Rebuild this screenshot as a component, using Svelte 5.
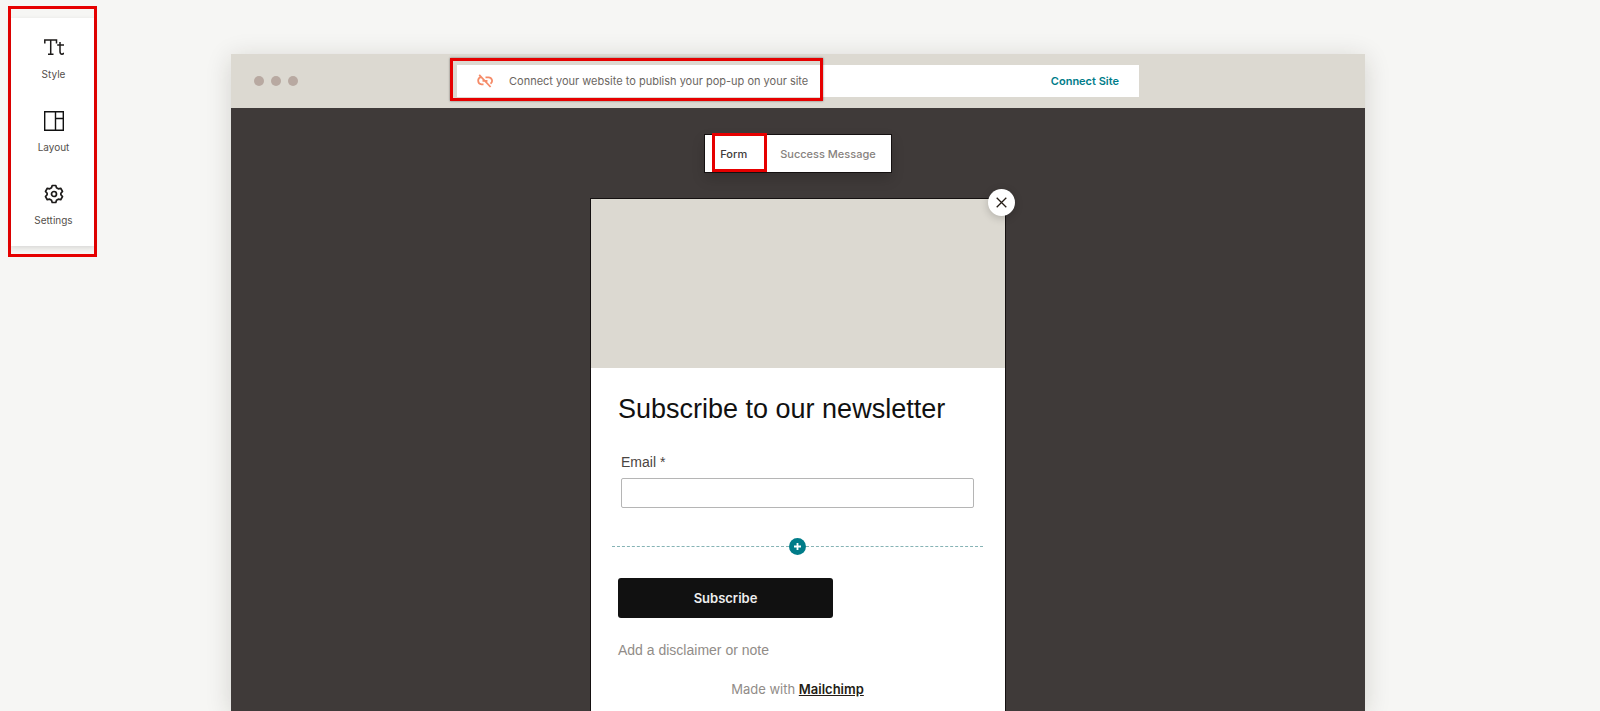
<script>
  let email = "";
  let activeTab = "form";

  const tools = [
    { id: "style", label: "Style" },
    { id: "layout", label: "Layout" },
    { id: "settings", label: "Settings" },
  ];
</script>

<div class="page">
  <aside class="highlight">
    <nav class="tools" aria-label="Editor">
      {#each tools as tool}
        <button type="button" class="tool">
          {#if tool.id === "style"}
            <svg width="20" height="20" viewBox="0 0 20 20" fill="none" stroke="#1c1a19" stroke-width="1.5">
              <path d="M.8 5.500V2H12.500V5.500M6.700 2V16M4 16.200H9.500M13.200 7H20M16 4V13.500Q16 16.200 18 16.200Q19.300 16.200 20 15" />
            </svg>
          {:else if tool.id === "layout"}
            <svg width="20" height="20" viewBox="0 0 20 20" fill="none" stroke="#111" stroke-width="1.4">
              <path d="M.7.7H19.300V19.300H.7ZM11.500.7V19.300M11.500 7.500H19.300" />
            </svg>
          {:else}
            <svg width="20" height="20" viewBox="0 0 20 20" fill="none" stroke="#1c1a19" stroke-width="1.7">
              <path d="M8.200 1.500H11.800L12.500 3.800L14.300 4.800L16.700 4.300L18.500 7.400L16.900 9.200V10.800L18.500 12.600L16.700 15.700L14.300 15.200L12.500 16.200L11.800 18.500H8.200L7.500 16.200L5.700 15.200L3.300 15.700L1.500 12.600L3.100 10.800V9.200L1.500 7.400L3.300 4.300L5.700 4.800L7.500 3.800Z" stroke-linejoin="round" />
              <circle cx="10" cy="10" r="2.500" />
            </svg>
          {/if}
          <span>{tool.label}</span>
        </button>
      {/each}
    </nav>
  </aside>

  <main class="browser">
    <header class="chrome">
      <div class="dots"><i></i><i></i><i></i></div>
      <div class="connect">
        <svg width="16" height="14" viewBox="0 0 16 14" fill="none" stroke="#f58b68" stroke-width="1.800">
          <path d="M4 3.200A3.600 3.600 0 0 0 4.500 10.300H6.500M8.500 3.300H11.500A3.500 3.500 0 0 1 13.500 9.700M2.200.8L13.600 13M5.500 6.800H10.500" />
        </svg>
        <span>Connect your website to publish your pop-up on your site</span>
        <a href="#connect">Connect Site</a>
        <div class="mark mark-connect"></div>
      </div>
    </header>

    <section class="canvas">
      <div class="tabs">
        <button type="button" class:active={activeTab === "form"} on:click={() => (activeTab = "form")}>
          Form
        </button>
        <button type="button" class:active={activeTab === "success"} on:click={() => (activeTab = "success")}>
          Success Message
        </button>
        <div class="mark mark-tab"></div>
      </div>

      <div class="popup">
        <button type="button" class="close" aria-label="Close">
          <svg width="11" height="11" viewBox="0 0 11 11" stroke="#241c15" stroke-width="1.300">
            <path d="M.7.7L10.300 10.300M10.300.7L.7 10.300" />
          </svg>
        </button>
        <div class="image"></div>
        <form on:submit|preventDefault>
          <h1>Subscribe to our newsletter</h1>
          <div class="field">
            <label for="email">Email *</label>
            <input id="email" type="email" bind:value={email} />
          </div>
          <div class="divider">
            <button type="button" aria-label="Add field">
              <svg width="7" height="7" viewBox="0 0 7 7" stroke="#fff" stroke-width="1.800">
                <path d="M3.500 0V7M0 3.500H7" />
              </svg>
            </button>
          </div>
          <button type="submit" class="subscribe">Subscribe</button>
          <p class="note">Add a disclaimer or note</p>
          <p class="made">Made with <a href="#mailchimp">Mailchimp</a></p>
        </form>
      </div>
    </section>
  </main>
</div>

<style>
  :global(body) {
    background: #f6f6f4;
  }

  .page {
    display: grid;
    grid-template-columns: 231px 1fr;
    min-height: 100vh;
    box-sizing: border-box;
    padding-right: 235px;
    overflow: hidden;
    font-family: Inter, "Liberation Sans", sans-serif;
    color: #241c15;
  }

  button {
    border: none;
    background: none;
    padding: 0;
    font-family: inherit;
    cursor: pointer;
  }

  svg {
    display: block;
    flex: none;
  }

  .highlight {
    justify-self: start;
    align-self: start;
    margin: 6px 0 0 8px;
    padding: 9px 0 8px;
    border: 3px solid #e60000;
  }

  .tools {
    display: flex;
    flex-direction: column;
    gap: 29px;
    width: 83px;
    box-sizing: border-box;
    padding: 20px 0 18px 2px;
    background: #fff;
    box-shadow: 0 2px 5px rgba(36, 28, 21, 0.14);
  }

  .tool {
    display: flex;
    flex-direction: column;
    align-items: center;
    gap: 8px;
    font-size: 10px;
    line-height: 16px;
    color: #55504c;
  }

  .browser {
    display: flex;
    flex-direction: column;
    margin-top: 54px;
    box-shadow: 0 4px 24px rgba(36, 28, 21, 0.16);
  }

  .chrome {
    display: grid;
    grid-template-columns: 1fr 682px 1fr;
    align-items: center;
    height: 54px;
    background: #dcd9d1;
  }

  .dots {
    display: flex;
    gap: 7px;
    padding-left: 23px;
  }

  .dots i {
    width: 10px;
    height: 10px;
    border-radius: 50%;
    background: #b8a9a1;
  }

  .connect {
    position: relative;
    display: flex;
    align-items: center;
    height: 32px;
    box-sizing: border-box;
    padding: 0 20px;
    background: #fff;
    font-size: 11px;
    color: #6b6662;
  }

  .connect span {
    margin-left: 16px;
  }

  .connect a {
    margin-left: auto;
    color: #007c89;
    font-weight: 600;
    text-decoration: none;
  }

  .mark {
    position: absolute;
    box-sizing: border-box;
    border: 3px solid #e60000;
    pointer-events: none;
  }

  .mark-connect {
    left: -7px;
    top: -7px;
    width: 373px;
    height: 43px;
    box-shadow: 0 0 2px rgba(0, 0, 0, 0.5);
  }

  .mark-tab {
    left: 7px;
    top: -2px;
    width: 55px;
    height: 39px;
  }

  .canvas {
    flex: 1;
    display: flex;
    flex-direction: column;
    align-items: center;
    background: #3f3a39;
  }

  .tabs {
    position: relative;
    display: flex;
    gap: 33px;
    height: 37px;
    margin: 27px 0;
    padding: 0 15px;
    background: #fff;
    box-shadow: 0 0 0 1px #151111, 0 6px 14px rgba(0, 0, 0, 0.18);
  }

  .tabs button {
    font-size: 11px;
    font-weight: 500;
    color: #87827e;
  }

  .tabs .active {
    color: #403b3b;
  }

  .popup {
    position: relative;
    flex: 1;
    width: 414px;
    background: #fff;
    box-shadow: 0 0 0 1px #151111;
  }

  .close {
    position: absolute;
    top: -10px;
    right: -10px;
    display: flex;
    align-items: center;
    justify-content: center;
    width: 27px;
    height: 27px;
    border-radius: 50%;
    background: #fff;
    box-shadow: 0 2px 8px rgba(0, 0, 0, 0.2);
  }

  .image {
    height: 169px;
    background: #dcd9d1;
  }

  form {
    padding: 24px 22px 12px 21px;
    font-family: "Liberation Sans", Arial, sans-serif;
  }

  h1 {
    margin: 0 6px 27px;
    font-size: 27px;
    line-height: 34px;
    font-weight: 400;
    color: #111;
  }

  .field {
    display: flex;
    flex-direction: column;
    gap: 7px;
    margin: 0 9px 30px;
  }

  .field label {
    font-size: 14px;
    line-height: 18px;
    color: #4a4542;
  }

  .field input {
    height: 30px;
    box-sizing: border-box;
    padding: 0 8px;
    border: 1px solid #b5b5b5;
    border-radius: 2px;
    font-size: 14px;
  }

  .divider {
    display: flex;
    align-items: center;
  }

  .divider::before,
  .divider::after {
    content: "";
    flex: 1;
    border-top: 1px dashed #86b3b5;
  }

  .divider button {
    display: flex;
    align-items: center;
    justify-content: center;
    width: 17px;
    height: 17px;
    border-radius: 50%;
    background: #007c89;
  }

  .subscribe {
    width: 215px;
    height: 40px;
    margin: 23px 6px;
    border-radius: 3px;
    background: #111;
    color: #eee;
    font-family: Inter, "Liberation Sans", sans-serif;
    font-size: 13px;
    font-weight: 600;
  }

  .note {
    margin: 0 6px 20px;
    font-size: 14px;
    line-height: 18px;
    color: #918c88;
  }

  .made {
    margin: 0;
    font-family: Inter, "Liberation Sans", sans-serif;
    font-size: 13px;
    line-height: 20px;
    text-align: center;
    color: #918c88;
  }

  .made a {
    color: #241c15;
    font-weight: 600;
  }
</style>
